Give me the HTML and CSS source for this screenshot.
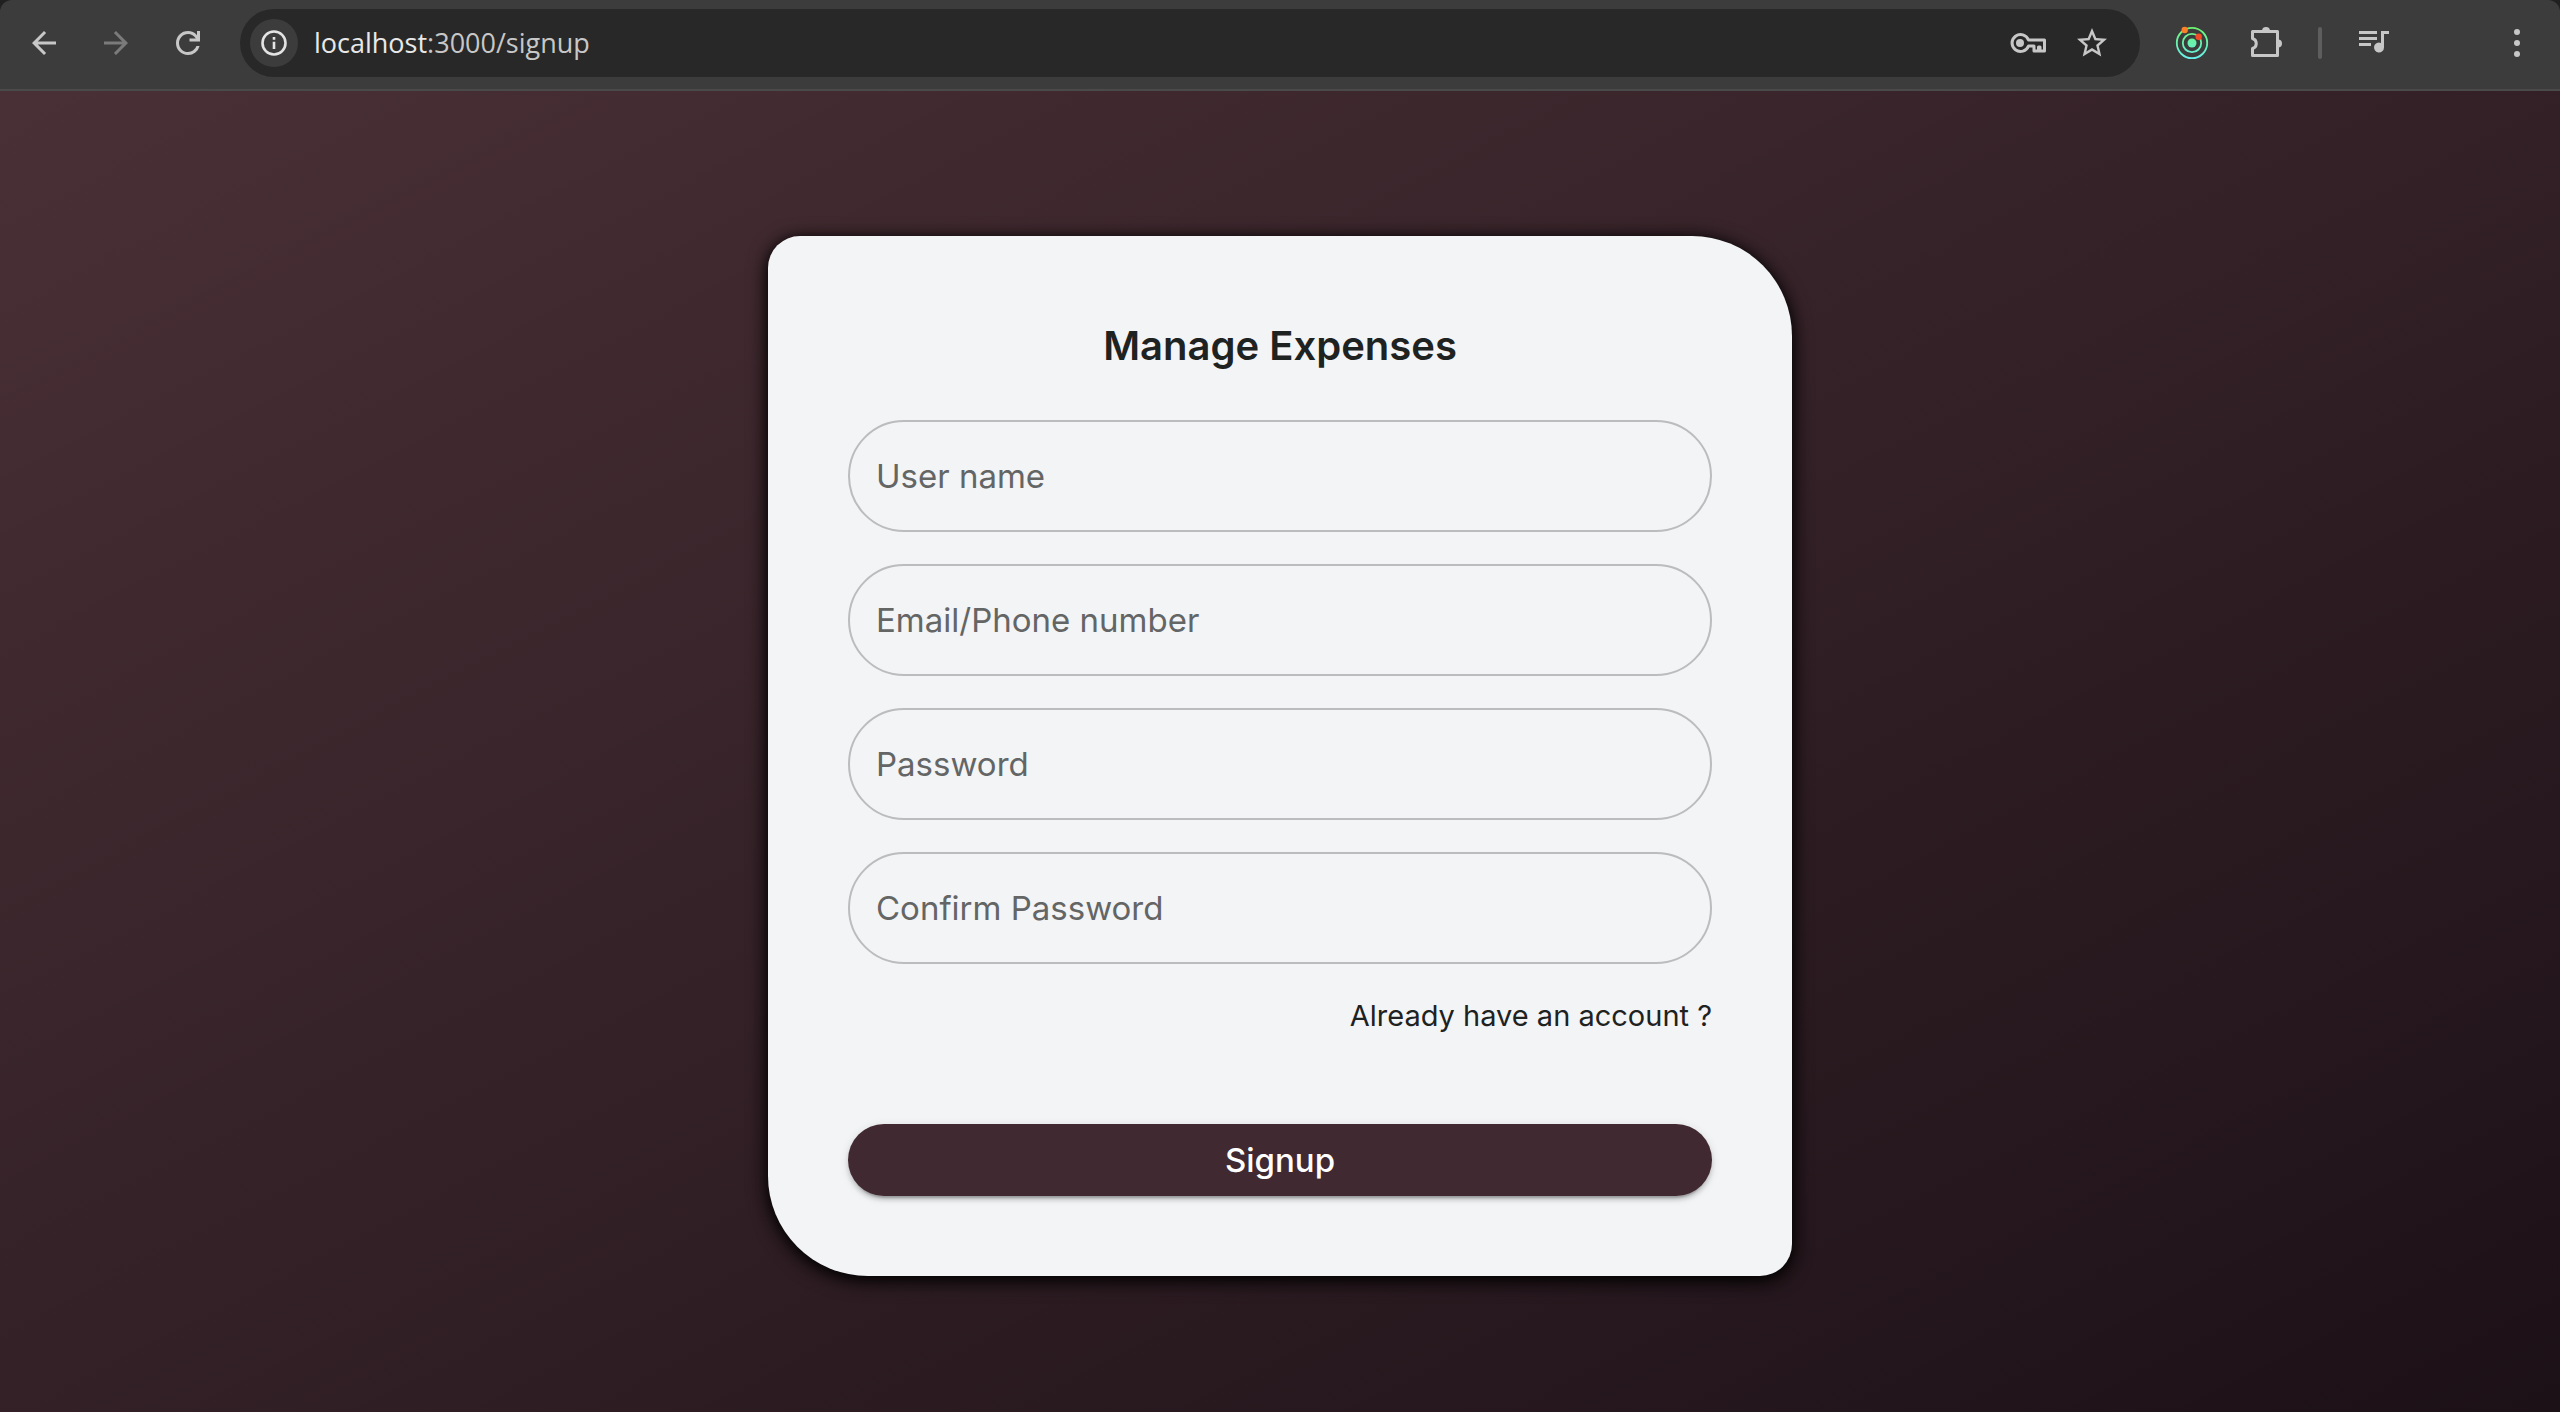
FILE: index.html
```html
<!DOCTYPE html>
<html lang="en">
<head>
<meta charset="utf-8">
<title>Signup</title>
<link rel="stylesheet" href="styles.css">
</head>
<body>
<header class="toolbar">
  <nav class="nav-buttons" aria-label="Navigation">
    <button class="icon-button" aria-label="Back">
      <svg class="icon" viewBox="0 0 24 24"><path d="M20 11H7.83l5.59-5.59L12 4l-8 8 8 8 1.41-1.41L7.83 13H20v-2z"/></svg>
    </button>
    <button class="icon-button icon-button-dim" aria-label="Forward">
      <svg class="icon" viewBox="0 0 24 24"><path d="M12 4l-1.41 1.41L16.17 11H4v2h12.17l-5.58 5.59L12 20l8-8z"/></svg>
    </button>
    <button class="icon-button" aria-label="Reload">
      <svg class="icon" viewBox="0 0 24 24"><path d="M12 20c-2.23 0-4.13-.78-5.68-2.33S4 14.230 4 12s.77-4.13 2.320-5.680S9.770 4 12 4c1.150 0 2.250.24 3.300.71A7.800 7.800 0 0 1 18 6.750V4h2v7h-7V9h4.200a5.900 5.900 0 0 0-2.180-2.200A5.900 5.900 0 0 0 12 6c-1.670 0-3.080.58-4.250 1.750S6 10.330 6 12s.58 3.080 1.750 4.250S10.330 18 12 18c1.280 0 2.440-.37 3.470-1.100A5.700 5.700 0 0 0 17.650 14h2.100a7.900 7.900 0 0 1-2.850 4.330A7.700 7.700 0 0 1 12 20z"/></svg>
    </button>
  </nav>
  <div class="address">
    <button class="site-info" aria-label="Site information">
      <svg class="info-icon" viewBox="0 0 26 26"><circle cx="13" cy="13" r="11.500" fill="none" stroke="currentColor" stroke-width="2.600"/><path d="M11.700 11.700h2.600v7.300h-2.600zM11.700 7h2.600v2.700h-2.600z"/></svg>
    </button>
    <p class="url"><span class="url-host">localhost</span>:3000/signup</p>
    <button class="icon-button" aria-label="Passwords">
      <svg class="icon" viewBox="0 0 36 36"><g fill="none" stroke="currentColor" stroke-width="3" stroke-linejoin="round"><path d="M18.500 15A8.500 8.500 0 1 0 18.500 21H24V26H28.500V22H30V26H34.500V15Z"/></g><circle cx="10" cy="18" r="4"/></svg>
    </button>
    <button class="icon-button" aria-label="Bookmark">
      <svg class="icon" viewBox="0 0 24 24"><path d="M22 9.240l-7.190-.62L12 2 9.190 8.630 2 9.240l5.460 4.730L5.820 21 12 17.270 18.180 21l-1.630-7.030L22 9.240zM12 15.400l-3.760 2.270 1-4.280-3.320-2.880 4.380-.38L12 6.100l1.710 4.040 4.380.38-3.320 2.880 1 4.280L12 15.400z"/></svg>
    </button>
  </div>
  <div class="extensions">
    <button class="icon-button" aria-label="Orbit extension">
      <svg class="icon" viewBox="0 0 36 36">
        <defs><linearGradient id="orbit" x1="0" y1="2" x2="0" y2="34" gradientUnits="userSpaceOnUse"><stop offset="0" stop-color="#6df56d"/><stop offset="1" stop-color="#66f0ee"/></linearGradient></defs>
        <g fill="none" stroke="url(#orbit)" stroke-width="1.800"><circle cx="18" cy="18" r="15.200"/><circle cx="18" cy="18" r="9.200"/></g>
        <circle cx="18" cy="18" r="4.500" fill="url(#orbit)"/><circle cx="10.700" cy="5" r="3.200" fill="#fb8129"/><circle cx="24.700" cy="11.700" r="3.200" fill="#f44b27"/>
      </svg>
    </button>
    <button class="icon-button" aria-label="Extensions">
      <svg class="icon" viewBox="0 0 36 36"><path fill="none" stroke="currentColor" stroke-width="3" stroke-linejoin="round" d="M4.500 6.500H29.500V30.500H4.500V23.500A5.200 5.200 0 0 0 4.500 13.500Z"/><path d="M14 6a4 4 0 0 1 8 0zM30 14.500a4 4 0 0 1 0 8z"/></svg>
    </button>
    <span class="divider"></span>
    <button class="icon-button" aria-label="Media controls">
      <svg class="icon" viewBox="0 0 36 36"><path d="M3 6h18v3H3zM3 12h18v3H3zM3 18h12v3H3zM25 6h8v3h-5v13.500a5 5 0 1 1-3-4.600z"/></svg>
    </button>
  </div>
  <button class="icon-button menu-button" aria-label="Menu">
    <svg class="icon" viewBox="0 0 36 36"><circle cx="18" cy="7" r="3"/><circle cx="18" cy="18" r="3"/><circle cx="18" cy="29" r="3"/></svg>
  </button>
</header>
<main class="page">
  <form class="card">
    <h1 class="title">Manage Expenses</h1>
    <div class="fields">
      <input class="field" type="text" placeholder="User name" aria-label="User name">
      <input class="field" type="text" placeholder="Email/Phone number" aria-label="Email/Phone number">
      <input class="field" type="password" placeholder="Password" aria-label="Password">
      <input class="field" type="password" placeholder="Confirm Password" aria-label="Confirm Password">
    </div>
    <a class="login-link" href="#login">Already have an account ?</a>
    <button class="submit" type="button">Signup</button>
  </form>
</main>
</body>
</html>
```
FILE: styles.css
```css
* {
  box-sizing: border-box;
}

body {
  margin: 0;
  min-height: 100vh;
  display: flex;
  flex-direction: column;
  background: #202020;
  font-family: Inter, "Liberation Sans", sans-serif;
}

button {
  border: 0;
  padding: 0;
  background: none;
  font-family: inherit;
  cursor: pointer;
}

/* Browser toolbar */
.toolbar {
  display: flex;
  align-items: center;
  gap: 34px;
  height: 91px;
  padding: 0 25px 3px 26px;
  background: #3c3c3c;
  border-bottom: 2px solid #4a4a4a;
  border-radius: 12px 12px 0 0;
  color: #c7c7c7;
}

.nav-buttons,
.extensions {
  display: flex;
  align-items: center;
  gap: 36px;
}

.icon-button {
  display: flex;
  flex: none;
  color: inherit;
}

.icon-button-dim {
  color: #7b7b7b;
}

.icon {
  width: 36px;
  height: 36px;
  fill: currentColor;
}

.address {
  flex: 1;
  display: flex;
  align-items: center;
  gap: 28px;
  height: 68px;
  padding: 0 30px 0 10px;
  border-radius: 34px;
  background: #282828;
}

.site-info {
  display: flex;
  flex: none;
  align-items: center;
  justify-content: center;
  width: 48px;
  height: 48px;
  border-radius: 50%;
  background: #3c3c3c;
  color: #e3e3e3;
}

.info-icon {
  width: 26px;
  height: 26px;
  fill: currentColor;
}

.url {
  flex: 1;
  margin: 0 0 0 -12px;
  font: 27px/36px "Open Sans", "Noto Sans", sans-serif;
  color: #c7c7c7;
}

.url-host {
  color: #e8e8e8;
}

.extensions {
  gap: 38px;
}

.divider {
  width: 4px;
  height: 32px;
  margin: 0 -4px;
  border-radius: 2px;
  background: #5e5e5e;
}

.menu-button {
  margin-left: 73px;
}

/* Signup page */
.page {
  flex: 1;
  padding: 145px 0 136px;
  background: linear-gradient(to bottom right, #493036, #1c1117);
}

.card {
  display: flex;
  flex-direction: column;
  width: 40%;
  min-width: 640px;
  margin: 0 auto;
  padding: 80px;
  border-radius: 32px 100px;
  background: #f3f4f6;
  box-shadow: 0 4px 20px #000, 0 2px 12px rgba(0, 0, 0, 0.5);
  color: #1e2221;
}

.title {
  margin: 0 0 44px;
  font-size: 40px;
  line-height: 60px;
  font-weight: 600;
  text-align: center;
}

.fields {
  display: flex;
  flex-direction: column;
  gap: 32px;
}

.field {
  width: 100%;
  height: 112px;
  padding: 0 26px;
  border: 2px solid #bbbcbe;
  border-radius: 56px;
  background: transparent;
  font-family: inherit;
  font-size: 33px;
  color: #1e2221;
}

.field::placeholder {
  color: #646565;
  opacity: 1;
}

.login-link {
  align-self: flex-end;
  margin: 34px 0 90px;
  font-size: 29px;
  line-height: 36px;
  color: inherit;
  text-decoration: none;
}

.submit {
  height: 72px;
  border-radius: 36px;
  background: #402930;
  box-shadow: 0 6px 2px -4px rgba(0, 0, 0, 0.2), 0 4px 4px rgba(0, 0, 0, 0.14), 0 2px 10px rgba(0, 0, 0, 0.12);
  color: #fff;
  font-size: 33px;
  font-weight: 500;
}
```
